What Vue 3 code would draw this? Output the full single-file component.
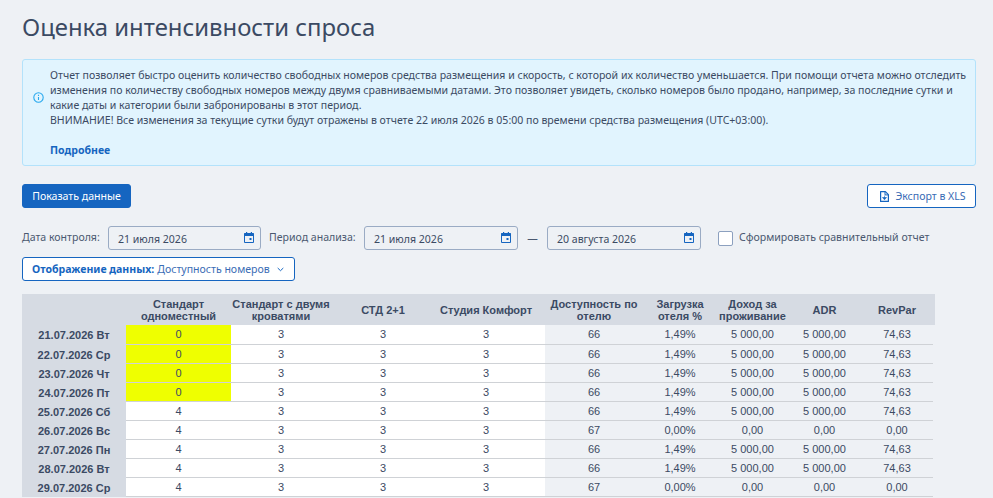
<script setup>
const cols = ['Стандарт одноместный', 'Стандарт с двумя кроватями', 'СТД 2+1', 'Студия Комфорт', 'Доступность по отелю', 'Загрузка отеля %', 'Доход за проживание', 'ADR', 'RevPar']
const full = ['66', '1,49%', '5 000,00', '5 000,00', '74,63']
const empty = ['67', '0,00%', '0,00', '0,00', '0,00']
const rows = [
  ['21.07.2026 Вт', 0, full],
  ['22.07.2026 Ср', 0, full],
  ['23.07.2026 Чт', 0, full],
  ['24.07.2026 Пт', 0, full],
  ['25.07.2026 Сб', 4, full],
  ['26.07.2026 Вс', 4, empty],
  ['27.07.2026 Пн', 4, full],
  ['28.07.2026 Вт', 4, full],
  ['29.07.2026 Ср', 4, empty],
]
const widths = [104, 105, 100, 104, 110, 98, 74, 71, 73, 72]
const dates = [
  { text: '21 июля 2026', cls: 'w153' },
  { text: '21 июля 2026', cls: 'w154' },
  { text: '20 августа 2026', cls: 'w154' },
]
</script>

<template>
  <div class="page">
    <h1 class="title">Оценка интенсивности спроса</h1>

    <div class="alert">
      <svg class="alert-icon" width="11" height="11" viewBox="0 0 11 11" fill="none">
        <circle cx="5.500" cy="5.500" r="4.700" stroke="#29a9ee" stroke-width="1.100" />
        <path d="M5.500 5v3M5.500 2.800v1.100" stroke="#29a9ee" stroke-width="1.100" />
      </svg>
      <div class="alert-body">
        <p>Отчет позволяет быстро оценить количество свободных номеров средства размещения и скорость, с которой их количество уменьшается. При помощи отчета можно отследить изменения по количеству свободных номеров между двумя сравниваемыми датами. Это позволяет увидеть, сколько номеров было продано, например, за последние сутки и какие даты и категории были забронированы в этот период.<br>ВНИМАНИЕ! Все изменения за текущие сутки будут отражены в отчете 22 июля 2026 в 05:00 по времени средства размещения (UTC+03:00).</p>
        <a class="more">Подробнее</a>
      </div>
    </div>

    <div class="actions">
      <button class="btn primary">Показать данные</button>
      <button class="btn outline">
        <svg width="9" height="11" viewBox="0 0 9 11" fill="none">
          <path d="M.6.6h4.800l3 3v6.800H.6z" stroke="#1565c0" stroke-width="1.200" stroke-linejoin="round" />
          <path d="M5 .8v3.100h3" stroke="#1565c0" />
          <path d="M4.500 4.500v2.500M2.500 6.500h4L4.500 8.800z" fill="#1565c0" stroke="#1565c0" stroke-width=".6" />
        </svg>
        Экспорт в XLS
      </button>
    </div>

    <div class="filters">
      <span class="label first">Дата контроля:</span>
      <div class="date w153"><span>{{ dates[0].text }}</span>
        <svg class="cal" width="10" height="11" viewBox="0 0 10 11" fill="none"><path d="M.5 1.500h9v9h-9z" stroke="#1565c0" /><path d="M0 1.500h10v2.500H0zM2 0h1.200v1.500H2zM6.800 0H8v1.500H6.800z" fill="#1565c0" /><rect x="5.500" y="6" width="2" height="2" fill="#1565c0" /></svg>
      </div>
      <span class="label second">Период анализа:</span>
      <div class="date w154"><span>{{ dates[1].text }}</span>
        <svg class="cal" width="10" height="11" viewBox="0 0 10 11" fill="none"><path d="M.5 1.500h9v9h-9z" stroke="#1565c0" /><path d="M0 1.500h10v2.500H0zM2 0h1.200v1.500H2zM6.800 0H8v1.500H6.800z" fill="#1565c0" /><rect x="5.500" y="6" width="2" height="2" fill="#1565c0" /></svg>
      </div>
      <span class="dash">—</span>
      <div class="date w154"><span>{{ dates[2].text }}</span>
        <svg class="cal" width="10" height="11" viewBox="0 0 10 11" fill="none"><path d="M.5 1.500h9v9h-9z" stroke="#1565c0" /><path d="M0 1.500h10v2.500H0zM2 0h1.200v1.500H2zM6.800 0H8v1.500H6.800z" fill="#1565c0" /><rect x="5.500" y="6" width="2" height="2" fill="#1565c0" /></svg>
      </div>
      <span class="check"></span>
      <span class="label">Сформировать сравнительный отчет</span>
    </div>

    <button class="btn outline mode">
      <b>Отображение данных:</b><span>Доступность номеров</span>
      <svg width="7" height="5" viewBox="0 0 7 5" fill="none"><path d="M.7 1 3.500 3.700 6.300 1" stroke="#1565c0" /></svg>
    </button>

    <table class="grid">
      <colgroup>
        <col v-for="(w, i) in widths" :key="i" :style="{ width: w + 'px' }" />
      </colgroup>
      <thead>
        <tr>
          <th></th>
          <th v-for="c in cols" :key="c">{{ c }}</th>
        </tr>
      </thead>
      <tbody>
        <tr v-for="r in rows" :key="r[0]">
          <th class="day">{{ r[0] }}</th>
          <td class="room" :class="{ zero: r[1] === 0 }">{{ r[1] }}</td>
          <td class="room">3</td>
          <td class="room">3</td>
          <td class="room">3</td>
          <td v-for="(v, i) in r[2]" :key="i">{{ v }}</td>
        </tr>
      </tbody>
    </table>
  </div>
</template>

<style scoped>
.page {
  width: 993px;
  height: 498px;
  overflow: hidden;
  box-sizing: border-box;
  padding: 12px 17px 0 22px;
  background: #eef1f5;
  color: #3b4a63;
  font-family: "Noto Sans", sans-serif;
  font-size: 10.55px;
}
.title {
  margin: 0 0 17px;
  font-size: 23.88px;
  line-height: 30px;
  font-weight: 400;
  color: #3b4a63;
}
.alert {
  display: flex;
  align-items: center;
  gap: 6px;
  box-sizing: border-box;
  width: 954px;
  height: 107px;
  padding: 0 8px 0 10px;
  background: #e1f4fe;
  border: 1px solid #b3e2fb;
  border-radius: 3px;
}
.alert-icon { flex: none; margin-bottom: 30px; }
.alert-body p { margin: 0 0 15px; line-height: 15px; }
.more { display: block; line-height: 15px; font-weight: 700; color: #1565c0; }
.actions {
  display: flex;
  justify-content: space-between;
  margin-top: 18px;
}
.btn {
  box-sizing: border-box;
  width: 109px;
  height: 24px;
  border-radius: 3px;
  font: inherit;
  padding: 0;
  display: inline-flex;
  align-items: center;
  justify-content: center;
  white-space: nowrap;
}
.primary { background: #1565c0; border: 1px solid #1565c0; color: #fff; }
.outline { background: #fff; border: 1px solid #1565c0; color: #3a6cb5; }
.actions .outline { gap: 6px; padding-left: 3px; }
.filters {
  display: flex;
  align-items: center;
  margin-top: 18px;
  height: 24px;
  white-space: nowrap;
}
.label { color: #4a5870; line-height: 15px; position: relative; top: -1px; }
.first { width: 86px; flex: none; }
.second { width: 95px; margin-left: 8px; flex: none; }
.date {
  box-sizing: border-box;
  height: 24px;
  flex: none;
  display: flex;
  align-items: center;
  justify-content: space-between;
  padding: 1px 6px 0 9px;
  border: 1px solid #9aabc4;
  border-radius: 3px;
}
.w153 { width: 153px; }
.w154 { width: 154px; }
.cal { position: relative; top: -1px; }
.dash { width: 29px; text-align: center; color: #4a5870; flex: none; }
.check {
  flex: none;
  width: 15px;
  height: 15px;
  box-sizing: border-box;
  margin: 0 6px 0 17px;
  background: #fff;
  border: 1px solid #8ca0bf;
  border-radius: 2px;
}
.mode {
  width: 273px;
  margin-top: 7px;
  display: flex;
  justify-content: flex-start;
  padding-left: 9px;
  gap: 3px;
}
.mode b { font-weight: 700; color: #1565c0; }
.mode svg { margin-left: 4px; }
.grid {
  margin-top: 13px;
  width: 911px;
  table-layout: fixed;
  border-collapse: separate;
  border-spacing: 0;
  font-family: "Liberation Sans", Arial, sans-serif;
  font-size: 11px;
}
thead th {
  height: 30px;
  padding: 1px 0 0;
  background: #d6dbe3;
  font-weight: 700;
  line-height: 12px;
  text-align: center;
  color: #3b4a63;
}
thead th:nth-child(5), tbody td:nth-child(5) { padding-right: 8px; }
thead th:last-child { box-shadow: 2px 0 0 #d6dbe3; }
.day {
  padding: 0;
  background: #d6dbe3;
  font-weight: 700;
  text-align: center;
  color: #3b4a63;
}
tbody td {
  height: 18px;
  padding: 0;
  line-height: 14px;
  text-align: center;
  border-bottom: 1px solid #cfd2d6;
}
tbody tr:first-child td { height: 18px; padding-bottom: 1px; }
.room { background: #fff; }
.zero { background: #efff00; }
tbody tr:nth-child(4) .zero { box-shadow: 0 1px 0 #efff00; }
</style>
